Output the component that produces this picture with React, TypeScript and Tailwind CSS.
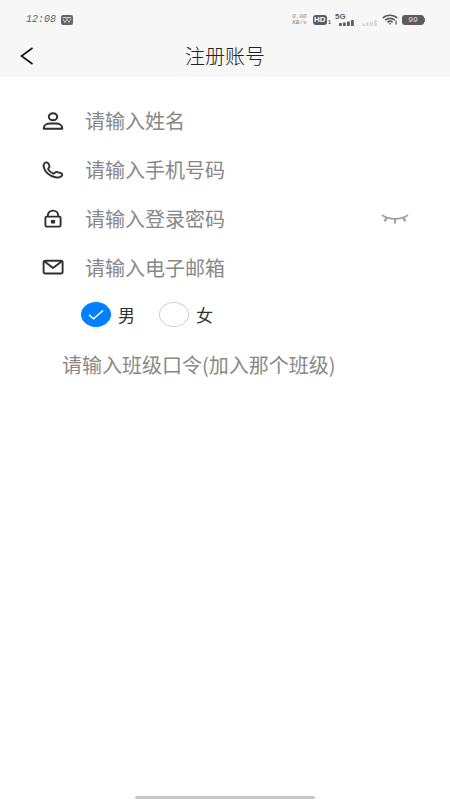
import React, { useState } from "react";

interface FieldProps {
    id: string;
    label: string;
    type?: string;
    icon: React.ReactNode;
    children?: React.ReactNode;
}

function UserIcon() {
    return (
        <svg className="h-5 w-6 shrink-0" viewBox="0 0 24 20" fill="none" stroke="#2f2f2f" strokeWidth="2" strokeLinejoin="round">
            <ellipse cx="12" cy="5.8" rx="4.2" ry="3.5" />
            <path d="M2.8 17.800v-.8c0-2.600 2.800-4.400 6.200-4.400h6c3.400 0 6.200 1.800 6.200 4.400v.8z" />
        </svg>
    );
}

function PhoneIcon() {
    return (
        <svg className="h-5 w-6 shrink-0" viewBox="0 0 24 20" fill="none" stroke="#2f2f2f" strokeWidth="1.9" strokeLinejoin="round">
            <path d="M3.600 3.200C4.800 2 6.600 2.200 7.300 3.400l1.100 2.200c.4.900.2 1.500-.6 2.100-.7.600-.8 1.200-.4 1.900 1 1.700 2.400 2.900 4.400 3.700.8.300 1.400.2 2-.4.800-.800 1.600-1 2.600-.7l3.500 1c1.300.4 1.700 1.400 1 2.400-1.300 1.700-3.700 2.300-6.400 1.700C8.700 16 4 12 2.800 7.300c-.4-1.600-.2-3.100.8-4.100z" />
        </svg>
    );
}

function LockIcon() {
    return (
        <svg className="h-5 w-6 shrink-0" viewBox="0 0 24 20" fill="none" stroke="#2f2f2f" strokeWidth="1.900">
            <rect x="4.400" y="7.600" width="15.200" height="10" rx="1.400" />
            <path d="M6.800 7.600V6.500c0-2.900 2.200-4.900 5.200-4.900s5.200 2 5.200 4.900v1.100" />
            <rect x="9.900" y="11" width="4.200" height="3.400" rx="0.600" fill="#2f2f2f" stroke="none" />
        </svg>
    );
}

function MailIcon() {
    return (
        <svg className="h-5 w-6 shrink-0" viewBox="0 0 24 20" fill="none" stroke="#2f2f2f" strokeWidth="1.900" strokeLinejoin="round">
            <rect x="2.600" y="2.700" width="19" height="12.800" rx="1.800" />
            <path d="M3.600 3.600L12 10l8.600-6.400" />
        </svg>
    );
}

function ClosedEyeIcon() {
    return (
        <svg className="h-3 w-7" viewBox="0 0 28 12" fill="none" stroke="#a0a0a0" strokeWidth="1.800">
            <path d="M1 2c3.500 2.600 8 3.900 13 3.900s9.500-1.300 13-3.900" />
            <path d="M5.800 4.700L3.500 8.400M14 5.900v4.500M22.200 4.700l2.300 3.700" strokeWidth="2.200" />
        </svg>
    );
}

function StatusBar() {
    return (
        <div className="flex h-[39px] items-center justify-between pr-[25px] pl-[26px] text-[#606060]">
            <div className="flex items-center gap-[5px]">
                <time className="font-['Liberation_Mono',monospace] text-[10px] italic">12:08</time>
                <svg className="h-[10px] w-3" viewBox="0 0 12 10" fill="none">
                    <rect width="12" height="10" rx="2" fill="#666" />
                    <path d="M1.800 2.500h8.400M2 3.500l1.800 4L6 4.500l2.200 3 1.800-4M4 2.500l2 2 2-2" stroke="#ddd" strokeWidth="0.800" />
                </svg>
            </div>
            <div className="flex items-center">
                <div className="mr-[6px] font-['Liberation_Mono',monospace] text-[6px] leading-[6px] text-[#888] italic">
                    <div>0.00</div>
                    <div>KB/s</div>
                </div>
                <div className="flex items-end gap-px">
                    <span className="flex h-[10px] w-[14px] items-center justify-center rounded-[3px] bg-[#5c5c5c] font-['Liberation_Sans',sans-serif] text-[8px] font-bold text-white">
                        HD
                    </span>
                    <span className="font-['Liberation_Sans',sans-serif] text-[6px] leading-[6px] font-bold">1</span>
                </div>
                <div className="ml-1 flex w-5 flex-col">
                    <span className="font-['Liberation_Sans',sans-serif] text-[8px] leading-[7px] font-bold">5G</span>
                    <svg className="ml-1 h-[6px] w-4" viewBox="0 0 16 6" fill="#5c5c5c">
                        <rect y="3" width="2.800" height="3" rx="0.500" />
                        <rect x="4" y="2.500" width="2.800" height="3.500" rx="0.500" />
                        <rect x="8" y="1.500" width="2.800" height="4.500" rx="0.500" />
                        <rect x="12" width="2.800" height="6" rx="0.500" />
                    </svg>
                </div>
                <svg className="mt-[7px] ml-[7px] h-[6px] w-4" viewBox="0 0 16 6" fill="#d9d9d9">
                    <rect y="3.500" width="2.800" height="2.500" rx="0.500" />
                    <rect x="4" y="2.500" width="2.800" height="3.500" rx="0.500" />
                    <rect x="8" y="1.500" width="2.800" height="4.500" rx="0.500" />
                    <rect x="12" width="2.800" height="6" rx="0.500" />
                </svg>
                <svg className="ml-1 h-[11px] w-4" viewBox="0 0 16 11" fill="none" stroke="#5c5c5c" strokeWidth="1.700">
                    <path d="M.8 4C4.500.3 11.500.3 15.200 4M3.200 6.200c2.600-2.500 7-2.500 9.600 0M5.400 8.300c1.500-1.300 3.700-1.300 5.200 0" />
                    <path d="M6.500 9.200h3L8 10.800z" fill="#5c5c5c" stroke="none" />
                    <path d="M14 6.500v4" strokeWidth="1.200" />
                </svg>
                <span className="ml-1 flex h-[10px] w-[22px] items-center justify-center rounded-[3px] bg-[#5c5c5c] font-['Liberation_Mono',monospace] text-[8px] text-[#ddd]">
                    99
                </span>
                <span className="h-1 w-px bg-[#777]" />
            </div>
        </div>
    );
}

function Field({ id, label, type = "text", icon, children }: FieldProps) {
    return (
        <div className="flex h-[49px] items-center pr-[41px] pl-[41px]">
            <label htmlFor={id} className="mr-5 shrink-0" aria-label={label}>
                {icon}
            </label>
            <input
                id={id}
                type={type}
                placeholder={label}
                className="min-w-0 flex-1 bg-transparent text-[20px] leading-7 text-[#333] outline-none placeholder:text-[#888888]"
            />
            {children}
        </div>
    );
}

interface GenderOptionProps {
    value: string;
    checked: boolean;
    onSelect: (value: string) => void;
}

function GenderOption({ value, checked, onSelect }: GenderOptionProps) {
    return (
        <label className="flex items-center gap-[7px] text-[17px] leading-6 text-[#2f2f2f]">
            <span className="relative flex">
                <input
                    type="radio"
                    name="gender"
                    value={value}
                    checked={checked}
                    onChange={() => onSelect(value)}
                    className="h-[25px] w-[30px] appearance-none rounded-[50%] border border-[#cfcfcf] bg-white checked:border-[#0080ff] checked:bg-[#0080ff]"
                />
                {checked && (
                    <svg className="pointer-events-none absolute inset-0 h-full w-full" viewBox="0 0 30 25" fill="none" stroke="white" strokeWidth="1.600">
                        <path d="M8 12.800l4.600 4L22 8.500" />
                    </svg>
                )}
            </span>
            {value}
        </label>
    );
}

export default function App() {
    const [gender, setGender] = useState("男");
    const [showPassword, setShowPassword] = useState(false);

    return (
        <div className="flex min-h-screen flex-col bg-white font-['Noto_Sans_CJK_SC',sans-serif]">
            <header className="bg-[#f7f7f7] pb-1">
                <StatusBar />
                <div className="grid h-[34px] grid-cols-[1fr_auto_1fr] items-center">
                    <button type="button" aria-label="返回" className="ml-5 w-fit">
                        <svg className="h-[18px] w-[14px]" viewBox="0 0 14 18" fill="none" stroke="#111" strokeWidth="1.600">
                            <path d="M12.500 1L1.500 9l11 8" />
                        </svg>
                    </button>
                    <h1 className="text-[20px] leading-7 font-light text-[#222]">注册账号</h1>
                </div>
            </header>

            <form className="flex flex-col pt-[19px]">
                <Field id="name" label="请输入姓名" icon={<UserIcon />} />
                <Field id="phone" label="请输入手机号码" type="tel" icon={<PhoneIcon />} />
                <Field id="password" label="请输入登录密码" type={showPassword ? "text" : "password"} icon={<LockIcon />}>
                    <button type="button" aria-label="显示密码" onClick={() => setShowPassword(v => !v)}>
                        <ClosedEyeIcon />
                    </button>
                </Field>
                <Field id="email" label="请输入电子邮箱" type="email" icon={<MailIcon />} />

                <div className="flex h-[45px] items-center gap-6 pl-[81px]">
                    {["男", "女"].map(value => (
                        <GenderOption key={value} value={value} checked={gender === value} onSelect={setGender} />
                    ))}
                </div>

                <div className="flex h-14 items-center px-[62px]">
                    <input
                        type="text"
                        aria-label="班级口令"
                        placeholder="请输入班级口令(加入那个班级)"
                        className="min-w-0 flex-1 bg-transparent text-[20px] leading-7 text-[#333] outline-none placeholder:text-[#888888]"
                    />
                </div>
            </form>

            {/* Home indicator */}
            <div className="mx-auto mt-auto mb-px h-[3px] w-2/5 rounded-full bg-[#c6c6c6]" />
        </div>
    );
}
